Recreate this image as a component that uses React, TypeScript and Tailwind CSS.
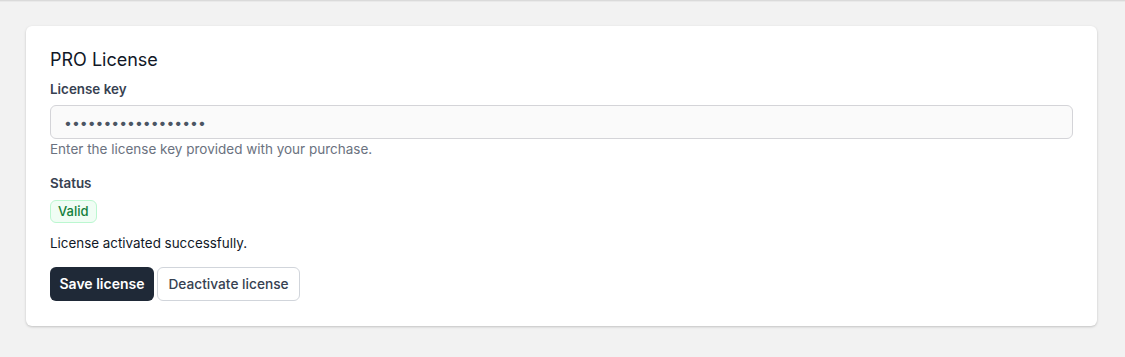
import React from "react";

export default function App() {
  return (
    <div className="min-h-[357px] bg-[#f2f2f2] font-['Inter',sans-serif]">
      <div className="h-[1px] bg-[#dadada]" />
      <div className="h-[1px] bg-[#e9e9e9]" />
      <div className="pt-[24px] pl-[26px] pr-[28px] pb-[30px]">
        <div className="rounded-md bg-white px-6 pt-[20px] pb-[25px] shadow-[0_1px_3px_rgba(0,0,0,0.15),0_1px_2px_rgba(0,0,0,0.06)]">
          <h2 className="text-lg leading-7 text-[#111827]">PRO License</h2>
          <label className="mt-[5px] block text-[13.4px] leading-5 font-semibold text-[#374151]">License key</label>
          <input
            type="password"
            readOnly
            value="abcdefghijklmnopqr"
            className="mt-[6px] block h-[34px] w-full rounded-md border border-[#d4d4d8] bg-[#fafafa] px-[13px] text-sm text-[#4b5563] outline-none"
          />
          <p className="text-[13.5px] leading-5 text-[#6b7280]">Enter the license key provided with your purchase.</p>
          <div className="mt-[14px] text-[13.4px] leading-5 font-semibold text-[#374151]">Status</div>
          <div className="mt-[7px] flex">
            <span className="inline-flex h-[23px] items-center rounded-md border border-[#bbf7d0] bg-[#f0fdf4] px-[7px] text-[13px] font-medium text-[#15803d]">
              Valid
            </span>
          </div>
          <p className="mt-[10px] text-[13.4px] leading-5 text-[#111827]">License activated successfully.</p>
          <div className="mt-[14px] flex gap-[3px]">
            <button className="h-[34px] rounded-md bg-[#1f2937] px-[9.5px] text-sm font-semibold text-white">Save license</button>
            <button className="h-[34px] rounded-md border border-[#d1d5db] bg-white px-[10.5px] text-[13.7px] font-medium text-[#374151]">Deactivate license</button>
          </div>
        </div>
      </div>
    </div>
  );
}
